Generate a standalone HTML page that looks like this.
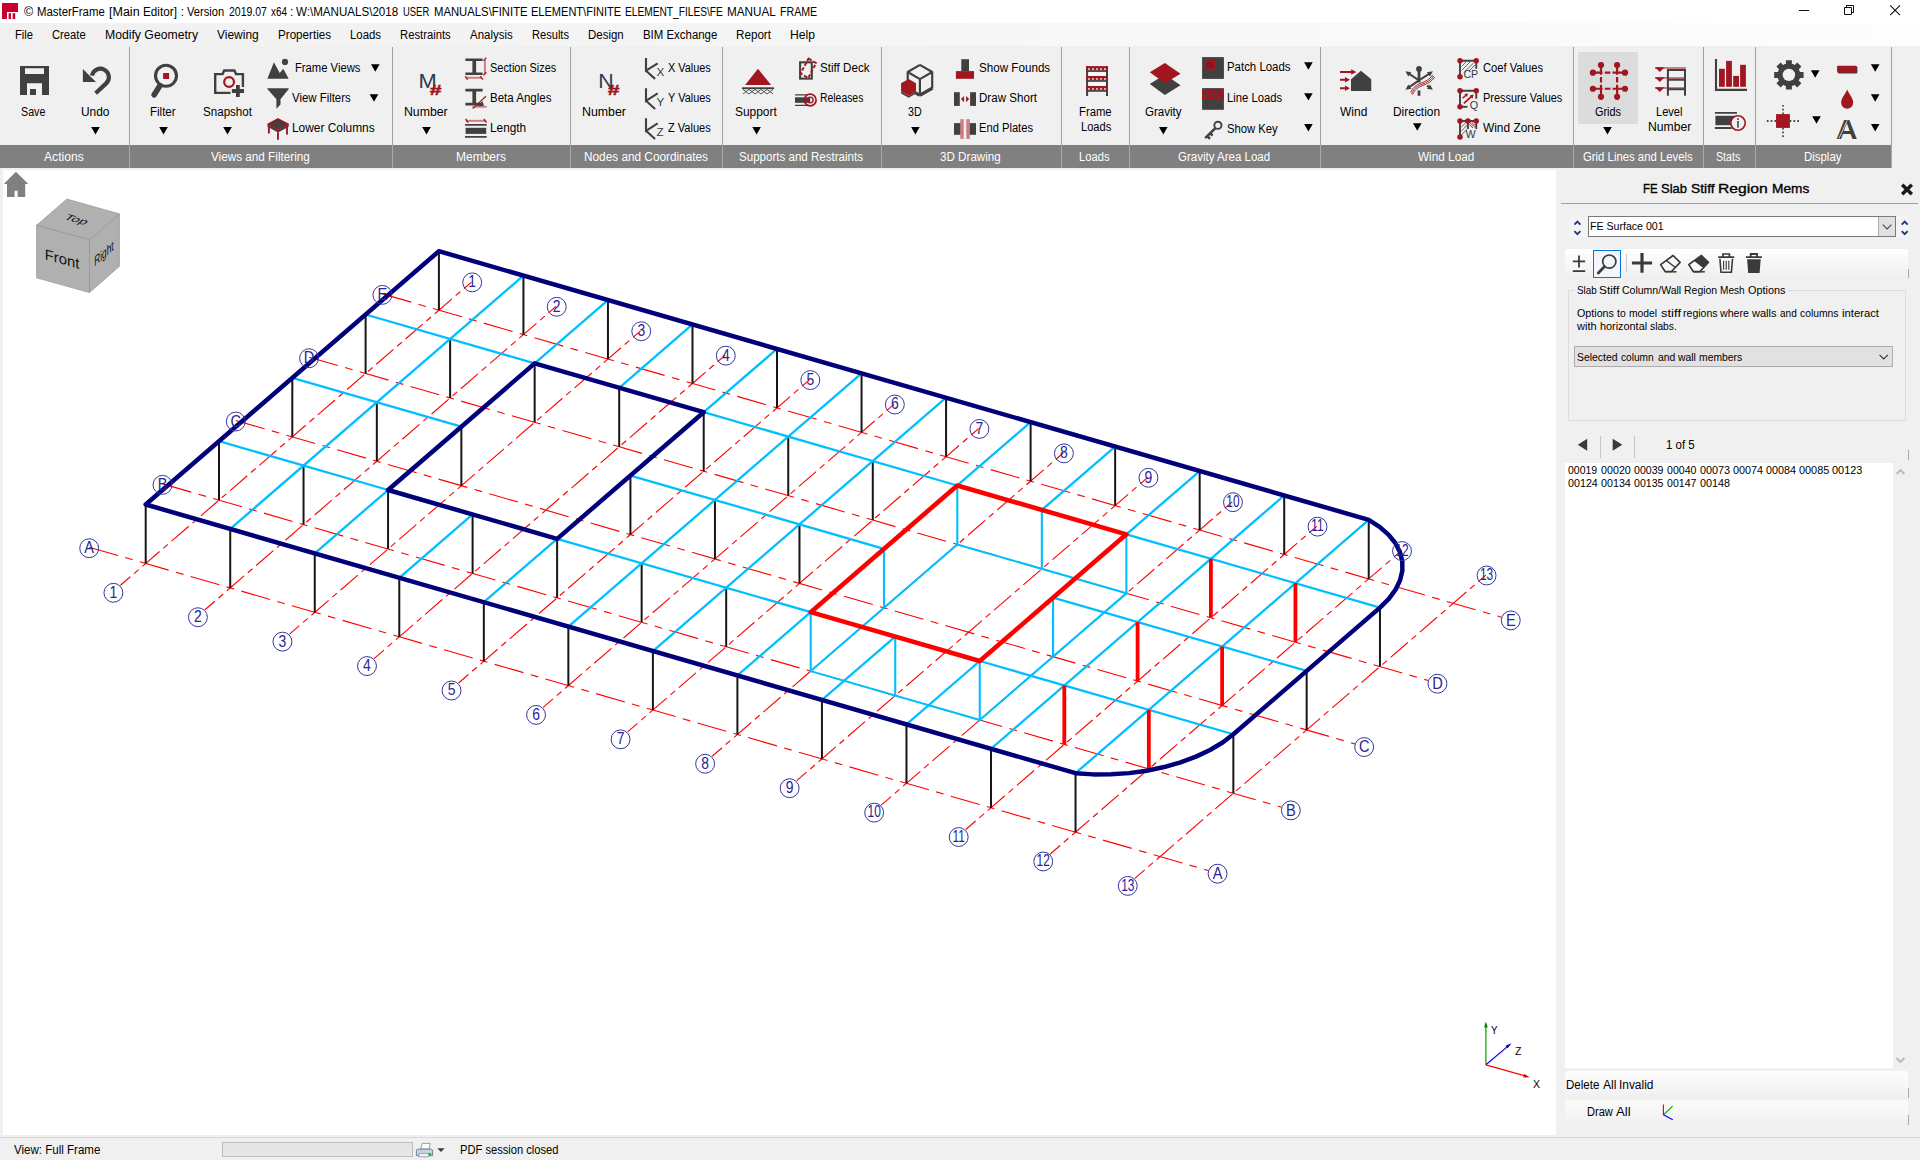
<!DOCTYPE html><html><head><meta charset="utf-8"><title>MasterFrame</title><style>
html,body{margin:0;padding:0}body{width:1920px;height:1160px;position:relative;overflow:hidden;background:#f0f0f0;font-family:"Liberation Sans",sans-serif}
.t{position:absolute;white-space:pre;line-height:16px;transform-origin:0 50%;font-family:"Liberation Sans",sans-serif}
svg{overflow:visible}
</style></head><body>
<div style="position:absolute;left:0;top:0;width:1920px;height:23px;background:#fff"></div>
<div style="position:absolute;left:0;top:23px;width:1920px;height:23px;background:linear-gradient(to right,#f0f0f0,#fdfdfd)"></div>
<div style="position:absolute;left:0;top:145px;width:1891px;height:23px;background:#808080"></div>
<div style="position:absolute;left:128.5px;top:47px;width:1px;height:98px;background:#a0a0a0"></div>
<div style="position:absolute;left:128.5px;top:145px;width:1px;height:23px;background:#a9a9a9"></div>
<div style="position:absolute;left:392.0px;top:47px;width:1px;height:98px;background:#a0a0a0"></div>
<div style="position:absolute;left:392.0px;top:145px;width:1px;height:23px;background:#a9a9a9"></div>
<div style="position:absolute;left:570.0px;top:47px;width:1px;height:98px;background:#a0a0a0"></div>
<div style="position:absolute;left:570.0px;top:145px;width:1px;height:23px;background:#a9a9a9"></div>
<div style="position:absolute;left:722.0px;top:47px;width:1px;height:98px;background:#a0a0a0"></div>
<div style="position:absolute;left:722.0px;top:145px;width:1px;height:23px;background:#a9a9a9"></div>
<div style="position:absolute;left:881.0px;top:47px;width:1px;height:98px;background:#a0a0a0"></div>
<div style="position:absolute;left:881.0px;top:145px;width:1px;height:23px;background:#a9a9a9"></div>
<div style="position:absolute;left:1060.5px;top:47px;width:1px;height:98px;background:#a0a0a0"></div>
<div style="position:absolute;left:1060.5px;top:145px;width:1px;height:23px;background:#a9a9a9"></div>
<div style="position:absolute;left:1129.0px;top:47px;width:1px;height:98px;background:#a0a0a0"></div>
<div style="position:absolute;left:1129.0px;top:145px;width:1px;height:23px;background:#a9a9a9"></div>
<div style="position:absolute;left:1320.0px;top:47px;width:1px;height:98px;background:#a0a0a0"></div>
<div style="position:absolute;left:1320.0px;top:145px;width:1px;height:23px;background:#a9a9a9"></div>
<div style="position:absolute;left:1573.0px;top:47px;width:1px;height:98px;background:#a0a0a0"></div>
<div style="position:absolute;left:1573.0px;top:145px;width:1px;height:23px;background:#a9a9a9"></div>
<div style="position:absolute;left:1703.0px;top:47px;width:1px;height:98px;background:#a0a0a0"></div>
<div style="position:absolute;left:1703.0px;top:145px;width:1px;height:23px;background:#a9a9a9"></div>
<div style="position:absolute;left:1755.0px;top:47px;width:1px;height:98px;background:#a0a0a0"></div>
<div style="position:absolute;left:1755.0px;top:145px;width:1px;height:23px;background:#a9a9a9"></div>
<div style="position:absolute;left:1891.0px;top:47px;width:1px;height:98px;background:#a0a0a0"></div>
<div style="position:absolute;left:1891.0px;top:145px;width:1px;height:23px;background:#a9a9a9"></div>
<div style="position:absolute;left:1578px;top:52px;width:60px;height:72px;background:#dcdcdc"></div>
<div style="position:absolute;left:3px;top:170px;width:1553px;height:965px;background:#fff"></div>
<div style="position:absolute;left:0;top:1137px;width:1920px;height:1px;background:#d7d7d7"></div>
<div style="position:absolute;left:222px;top:1142px;width:191px;height:15px;background:#e6e6e6;border:1px solid #bcbcbc;box-sizing:border-box"></div>
<svg id="dwg" width="1553" height="966" viewBox="3 170 1553 966" style="position:absolute;left:3px;top:170px">
<style>.g{stroke:#ff0000;stroke-width:1.12;stroke-dasharray:29.9 7.53 7.8 7.53;fill:none}.gz{stroke:#ff0000;stroke-width:1.12;stroke-dasharray:22.7 4.92 6.1 4.92;stroke-dashoffset:9.7;fill:none}.c{stroke:#161616;stroke-width:2}.cy{stroke:#00bfff;stroke-width:2.3;stroke-linecap:round}.cw{stroke:#00bfff;stroke-width:2.1;stroke-linecap:square}.n{stroke:#00007a;stroke-width:4.5;fill:none;stroke-linejoin:round;stroke-linecap:round}.r{stroke:#ff0000;stroke-width:4.6;fill:none;stroke-linejoin:round}.rc{stroke:#ff0000;stroke-width:3.8}.b{fill:none;stroke:#3535a0;stroke-width:1}.bt{fill:#262696;font-family:"Liberation Sans",sans-serif;font-size:16.2px;text-anchor:middle}</style>
<line x1="120.48" y1="585.29" x2="471.45" y2="282.06" class="gz"/>
<line x1="205.01" y1="609.71" x2="555.98" y2="306.49" class="gz"/>
<line x1="289.54" y1="634.14" x2="640.51" y2="330.91" class="gz"/>
<line x1="374.07" y1="658.56" x2="725.04" y2="355.34" class="gz"/>
<line x1="458.60" y1="682.99" x2="809.57" y2="379.76" class="gz"/>
<line x1="543.13" y1="707.41" x2="894.10" y2="404.19" class="gz"/>
<line x1="627.66" y1="731.84" x2="978.63" y2="428.61" class="gz"/>
<line x1="712.19" y1="756.26" x2="1063.16" y2="453.04" class="gz"/>
<line x1="796.72" y1="780.69" x2="1147.69" y2="477.46" class="gz"/>
<line x1="881.25" y1="805.11" x2="1232.22" y2="501.89" class="gz"/>
<line x1="965.78" y1="829.54" x2="1316.75" y2="526.31" class="gz"/>
<line x1="1050.31" y1="853.96" x2="1401.28" y2="550.74" class="gz"/>
<line x1="1134.84" y1="878.39" x2="1485.81" y2="575.16" class="gz"/>
<line x1="89.23" y1="547.18" x2="1208.16" y2="870.50" class="g"/>
<line x1="162.53" y1="483.85" x2="1281.46" y2="807.17" class="g"/>
<line x1="235.83" y1="420.52" x2="1354.76" y2="743.84" class="g"/>
<line x1="309.13" y1="357.19" x2="1428.06" y2="680.51" class="g"/>
<line x1="382.43" y1="293.86" x2="1501.36" y2="617.18" class="g"/>
<line x1="145.70" y1="504.50" x2="145.70" y2="563.50" class="c"/>
<line x1="219.00" y1="441.17" x2="219.00" y2="500.17" class="c"/>
<line x1="292.30" y1="377.84" x2="292.30" y2="436.84" class="c"/>
<line x1="365.60" y1="314.51" x2="365.60" y2="373.51" class="c"/>
<line x1="438.90" y1="251.18" x2="438.90" y2="310.18" class="c"/>
<line x1="230.23" y1="528.92" x2="230.23" y2="587.92" class="c"/>
<line x1="303.53" y1="465.59" x2="303.53" y2="524.59" class="c"/>
<line x1="376.83" y1="402.26" x2="376.83" y2="461.26" class="c"/>
<line x1="450.13" y1="338.93" x2="450.13" y2="397.93" class="c"/>
<line x1="523.43" y1="275.60" x2="523.43" y2="334.60" class="c"/>
<line x1="314.76" y1="553.35" x2="314.76" y2="612.35" class="c"/>
<line x1="388.06" y1="490.02" x2="388.06" y2="549.02" class="c"/>
<line x1="461.36" y1="426.69" x2="461.36" y2="485.69" class="c"/>
<line x1="534.66" y1="363.36" x2="534.66" y2="422.36" class="c"/>
<line x1="607.96" y1="300.03" x2="607.96" y2="359.03" class="c"/>
<line x1="399.29" y1="577.77" x2="399.29" y2="636.77" class="c"/>
<line x1="472.59" y1="514.44" x2="472.59" y2="573.44" class="c"/>
<line x1="619.19" y1="387.78" x2="619.19" y2="446.78" class="c"/>
<line x1="692.49" y1="324.45" x2="692.49" y2="383.45" class="c"/>
<line x1="483.82" y1="602.20" x2="483.82" y2="661.20" class="c"/>
<line x1="557.12" y1="538.87" x2="557.12" y2="597.87" class="c"/>
<line x1="630.42" y1="475.54" x2="630.42" y2="534.54" class="c"/>
<line x1="703.72" y1="412.21" x2="703.72" y2="471.21" class="c"/>
<line x1="777.02" y1="348.88" x2="777.02" y2="407.88" class="c"/>
<line x1="568.35" y1="626.62" x2="568.35" y2="685.62" class="c"/>
<line x1="641.65" y1="563.29" x2="641.65" y2="622.29" class="c"/>
<line x1="714.95" y1="499.97" x2="714.95" y2="558.97" class="c"/>
<line x1="788.25" y1="436.63" x2="788.25" y2="495.63" class="c"/>
<line x1="861.55" y1="373.31" x2="861.55" y2="432.31" class="c"/>
<line x1="652.88" y1="651.05" x2="652.88" y2="710.05" class="c"/>
<line x1="726.18" y1="587.72" x2="726.18" y2="646.72" class="c"/>
<line x1="799.48" y1="524.39" x2="799.48" y2="583.39" class="c"/>
<line x1="872.78" y1="461.06" x2="872.78" y2="520.06" class="c"/>
<line x1="946.08" y1="397.73" x2="946.08" y2="456.73" class="c"/>
<line x1="737.41" y1="675.48" x2="737.41" y2="734.48" class="c"/>
<line x1="1030.61" y1="422.16" x2="1030.61" y2="481.16" class="c"/>
<line x1="821.94" y1="699.90" x2="821.94" y2="758.90" class="c"/>
<line x1="1115.14" y1="446.58" x2="1115.14" y2="505.58" class="c"/>
<line x1="906.47" y1="724.33" x2="906.47" y2="783.33" class="c"/>
<line x1="1199.67" y1="471.01" x2="1199.67" y2="530.01" class="c"/>
<line x1="991.00" y1="748.75" x2="991.00" y2="807.75" class="c"/>
<line x1="1284.20" y1="495.43" x2="1284.20" y2="554.43" class="c"/>
<line x1="1075.53" y1="773.17" x2="1075.53" y2="832.17" class="c"/>
<line x1="1368.73" y1="519.86" x2="1368.73" y2="578.86" class="c"/>
<line x1="1233.36" y1="734.27" x2="1233.36" y2="793.27" class="c"/>
<line x1="1306.66" y1="670.94" x2="1306.66" y2="729.94" class="c"/>
<line x1="1379.96" y1="607.61" x2="1379.96" y2="666.61" class="c"/>
<line x1="810.71" y1="612.14" x2="810.71" y2="671.14" class="cw"/>
<line x1="895.24" y1="636.57" x2="895.24" y2="695.57" class="cw"/>
<line x1="979.77" y1="661.00" x2="979.77" y2="720.00" class="cw"/>
<line x1="884.01" y1="548.82" x2="884.01" y2="607.82" class="cw"/>
<line x1="1053.07" y1="597.67" x2="1053.07" y2="656.67" class="cw"/>
<line x1="957.31" y1="485.49" x2="957.31" y2="544.49" class="cw"/>
<line x1="1041.84" y1="509.91" x2="1041.84" y2="568.91" class="cw"/>
<line x1="1126.37" y1="534.34" x2="1126.37" y2="593.34" class="cw"/>
<line x1="810.71" y1="671.14" x2="979.77" y2="720.00" class="cw"/>
<line x1="979.77" y1="720.00" x2="1126.37" y2="593.34" class="cw"/>
<line x1="1126.37" y1="593.34" x2="957.31" y2="544.49" class="cw"/>
<line x1="957.31" y1="544.49" x2="810.71" y2="671.14" class="cw"/>
<line x1="219.00" y1="441.17" x2="388.06" y2="490.02" class="cy"/>
<line x1="557.12" y1="538.87" x2="810.71" y2="612.14" class="cy"/>
<line x1="979.77" y1="661.00" x2="1233.36" y2="734.27" class="cy"/>
<line x1="292.30" y1="377.84" x2="461.36" y2="426.69" class="cy"/>
<line x1="630.42" y1="475.54" x2="884.01" y2="548.82" class="cy"/>
<line x1="1053.07" y1="597.67" x2="1306.66" y2="670.94" class="cy"/>
<line x1="365.60" y1="314.51" x2="534.66" y2="363.36" class="cy"/>
<line x1="703.72" y1="412.21" x2="957.31" y2="485.49" class="cy"/>
<line x1="1126.37" y1="534.34" x2="1379.96" y2="607.61" class="cy"/>
<line x1="230.23" y1="528.92" x2="523.43" y2="275.60" class="cy"/>
<line x1="314.76" y1="553.35" x2="388.06" y2="490.02" class="cy"/>
<line x1="534.66" y1="363.36" x2="607.96" y2="300.03" class="cy"/>
<line x1="399.29" y1="577.77" x2="472.59" y2="514.44" class="cy"/>
<line x1="619.19" y1="387.78" x2="692.49" y2="324.45" class="cy"/>
<line x1="483.82" y1="602.20" x2="557.12" y2="538.87" class="cy"/>
<line x1="703.72" y1="412.21" x2="777.02" y2="348.88" class="cy"/>
<line x1="568.35" y1="626.62" x2="861.55" y2="373.31" class="cy"/>
<line x1="652.88" y1="651.05" x2="946.08" y2="397.73" class="cy"/>
<line x1="737.41" y1="675.48" x2="810.71" y2="612.14" class="cy"/>
<line x1="957.31" y1="485.49" x2="1030.61" y2="422.16" class="cy"/>
<line x1="821.94" y1="699.90" x2="895.24" y2="636.57" class="cy"/>
<line x1="1041.84" y1="509.91" x2="1115.14" y2="446.58" class="cy"/>
<line x1="906.47" y1="724.33" x2="979.77" y2="661.00" class="cy"/>
<line x1="1126.37" y1="534.34" x2="1199.67" y2="471.01" class="cy"/>
<line x1="991.00" y1="748.75" x2="1284.20" y2="495.43" class="cy"/>
<line x1="1075.53" y1="773.17" x2="1368.73" y2="519.86" class="cy"/>
<line x1="1064.30" y1="685.42" x2="1064.30" y2="744.42" class="rc"/>
<line x1="1137.60" y1="622.09" x2="1137.60" y2="681.09" class="rc"/>
<line x1="1210.90" y1="558.76" x2="1210.90" y2="617.76" class="rc"/>
<line x1="1148.83" y1="709.84" x2="1148.83" y2="768.84" class="rc"/>
<line x1="1222.13" y1="646.51" x2="1222.13" y2="705.51" class="rc"/>
<line x1="1295.43" y1="583.18" x2="1295.43" y2="642.18" class="rc"/>
<polygon class="n" points="145.70,504.50 1075.53,773.17 1093.07,774.38 1110.99,774.36 1129.00,773.12 1146.79,770.68 1164.07,767.07 1180.55,762.35 1195.96,756.61 1210.05,749.95 1222.59,742.46 1233.36,734.27 1379.96,607.61 1388.79,598.86 1395.53,589.70 1400.07,580.27 1402.34,570.73 1402.29,561.24 1399.93,551.96 1395.31,543.04 1388.48,534.62 1379.57,526.85 1368.73,519.86 438.90,251.18"/>
<polygon class="n" points="388.06,490.02 557.12,538.87 703.72,412.21 534.66,363.36"/>
<polygon class="r" points="810.71,612.14 979.77,661.00 1126.37,534.34 957.31,485.49"/>
<circle cx="113.40" cy="592.80" r="9.45" class="b"/>
<text transform="translate(113.40 597.70) scale(0.86 1)" class="bt">1</text>
<circle cx="472.20" cy="282.38" r="9.45" class="b"/>
<text transform="translate(472.20 287.28) scale(0.86 1)" class="bt">1</text>
<circle cx="197.93" cy="617.22" r="9.45" class="b"/>
<text transform="translate(197.93 622.12) scale(0.86 1)" class="bt">2</text>
<circle cx="556.73" cy="306.80" r="9.45" class="b"/>
<text transform="translate(556.73 311.70) scale(0.86 1)" class="bt">2</text>
<circle cx="282.46" cy="641.65" r="9.45" class="b"/>
<text transform="translate(282.46 646.55) scale(0.86 1)" class="bt">3</text>
<circle cx="641.26" cy="331.23" r="9.45" class="b"/>
<text transform="translate(641.26 336.13) scale(0.86 1)" class="bt">3</text>
<circle cx="366.99" cy="666.07" r="9.45" class="b"/>
<text transform="translate(366.99 670.97) scale(0.86 1)" class="bt">4</text>
<circle cx="725.79" cy="355.65" r="9.45" class="b"/>
<text transform="translate(725.79 360.55) scale(0.86 1)" class="bt">4</text>
<circle cx="451.52" cy="690.50" r="9.45" class="b"/>
<text transform="translate(451.52 695.40) scale(0.86 1)" class="bt">5</text>
<circle cx="810.32" cy="380.08" r="9.45" class="b"/>
<text transform="translate(810.32 384.98) scale(0.86 1)" class="bt">5</text>
<circle cx="536.05" cy="714.92" r="9.45" class="b"/>
<text transform="translate(536.05 719.82) scale(0.86 1)" class="bt">6</text>
<circle cx="894.85" cy="404.50" r="9.45" class="b"/>
<text transform="translate(894.85 409.40) scale(0.86 1)" class="bt">6</text>
<circle cx="620.58" cy="739.35" r="9.45" class="b"/>
<text transform="translate(620.58 744.25) scale(0.86 1)" class="bt">7</text>
<circle cx="979.38" cy="428.93" r="9.45" class="b"/>
<text transform="translate(979.38 433.83) scale(0.86 1)" class="bt">7</text>
<circle cx="705.11" cy="763.77" r="9.45" class="b"/>
<text transform="translate(705.11 768.67) scale(0.86 1)" class="bt">8</text>
<circle cx="1063.91" cy="453.36" r="9.45" class="b"/>
<text transform="translate(1063.91 458.25) scale(0.86 1)" class="bt">8</text>
<circle cx="789.64" cy="788.20" r="9.45" class="b"/>
<text transform="translate(789.64 793.10) scale(0.86 1)" class="bt">9</text>
<circle cx="1148.44" cy="477.78" r="9.45" class="b"/>
<text transform="translate(1148.44 482.68) scale(0.86 1)" class="bt">9</text>
<circle cx="874.17" cy="812.62" r="9.45" class="b"/>
<text transform="translate(874.17 817.33) scale(0.735 1)" class="bt">10</text>
<circle cx="1232.97" cy="502.21" r="9.45" class="b"/>
<text transform="translate(1232.97 506.91) scale(0.735 1)" class="bt">10</text>
<circle cx="958.70" cy="837.05" r="9.45" class="b"/>
<text transform="translate(958.70 841.75) scale(0.735 1)" class="bt">11</text>
<circle cx="1317.50" cy="526.63" r="9.45" class="b"/>
<text transform="translate(1317.50 531.33) scale(0.735 1)" class="bt">11</text>
<circle cx="1043.23" cy="861.47" r="9.45" class="b"/>
<text transform="translate(1043.23 866.17) scale(0.735 1)" class="bt">12</text>
<circle cx="1402.03" cy="551.06" r="9.45" class="b"/>
<text transform="translate(1402.03 555.76) scale(0.735 1)" class="bt">12</text>
<circle cx="1127.76" cy="885.90" r="9.45" class="b"/>
<text transform="translate(1127.76 890.60) scale(0.735 1)" class="bt">13</text>
<circle cx="1486.56" cy="575.48" r="9.45" class="b"/>
<text transform="translate(1486.56 580.18) scale(0.735 1)" class="bt">13</text>
<circle cx="89.20" cy="548.20" r="9.45" class="b"/>
<text transform="translate(89.20 553.40) scale(0.9 1)" class="bt">A</text>
<circle cx="1217.56" cy="873.70" r="9.45" class="b"/>
<text transform="translate(1217.56 878.90) scale(0.9 1)" class="bt">A</text>
<circle cx="162.50" cy="484.87" r="9.45" class="b"/>
<text transform="translate(162.50 490.07) scale(0.9 1)" class="bt">B</text>
<circle cx="1290.86" cy="810.37" r="9.45" class="b"/>
<text transform="translate(1290.86 815.57) scale(0.9 1)" class="bt">B</text>
<circle cx="235.80" cy="421.54" r="9.45" class="b"/>
<text transform="translate(235.80 426.74) scale(0.9 1)" class="bt">C</text>
<circle cx="1364.16" cy="747.04" r="9.45" class="b"/>
<text transform="translate(1364.16 752.24) scale(0.9 1)" class="bt">C</text>
<circle cx="309.10" cy="358.21" r="9.45" class="b"/>
<text transform="translate(309.10 363.41) scale(0.9 1)" class="bt">D</text>
<circle cx="1437.46" cy="683.71" r="9.45" class="b"/>
<text transform="translate(1437.46 688.91) scale(0.9 1)" class="bt">D</text>
<circle cx="382.40" cy="294.88" r="9.45" class="b"/>
<text transform="translate(382.40 300.08) scale(0.9 1)" class="bt">E</text>
<circle cx="1510.76" cy="620.38" r="9.45" class="b"/>
<text transform="translate(1510.76 625.58) scale(0.9 1)" class="bt">E</text>
</svg>
<div style="position:absolute;left:1561px;top:203px;width:357px;height:1px;background:#a0a0a0"></div>
<div style="position:absolute;left:1569px;top:216px;width:18px;height:21px;background:#f4f4f4"></div>
<div style="position:absolute;left:1896px;top:216px;width:13px;height:21px;background:#f4f4f4"></div>
<div style="position:absolute;left:1588px;top:216px;width:308px;height:21px;background:#fff;border:1px solid #7a7a7a;box-sizing:border-box"></div>
<div style="position:absolute;left:1878px;top:217px;width:17px;height:19px;background:#e1e1e1;border-left:1px solid #adadad;box-sizing:border-box"></div>
<div style="position:absolute;left:1565px;top:249px;width:343px;height:29px;background:linear-gradient(#ffffff,#f8f8f8 45%,#efefef);border-radius:2px"></div>
<div style="position:absolute;left:1908px;top:269px;width:1px;height:9px;background:#a8a8a8"></div>
<div style="position:absolute;left:1592.5px;top:250px;width:28px;height:28px;background:#f2f6fb;border:1px solid #0078d7;box-sizing:border-box"></div>
<div style="position:absolute;left:1625.5px;top:254px;width:1px;height:18px;background:#c8c8c8"></div>
<div style="position:absolute;left:1568px;top:290px;width:338px;height:131px;border:1px solid #dcdcdc;box-sizing:border-box"></div>
<div style="position:absolute;left:1574px;top:284px;width:214px;height:12px;background:#f0f0f0"></div>
<div style="position:absolute;left:1574px;top:346px;width:319px;height:21px;background:#e1e1e1;border:1px solid #adadad;box-sizing:border-box"></div>
<div style="position:absolute;left:1908px;top:450px;width:1px;height:10px;background:#a8a8a8"></div>
<div style="position:absolute;left:1600px;top:436px;width:1px;height:22px;background:#c4c4c4"></div>
<div style="position:absolute;left:1634px;top:436px;width:1px;height:22px;background:#c4c4c4"></div>
<div style="position:absolute;left:1565px;top:463px;width:328px;height:605px;background:#fff"></div>
<div style="position:absolute;left:1565px;top:1071px;width:343px;height:27px;background:linear-gradient(#fdfdfd,#f7f7f7 50%,#efefef);border-radius:3px 3px 0 0"></div>
<div style="position:absolute;left:1908px;top:1088px;width:1px;height:10px;background:#a8a8a8"></div>
<div style="position:absolute;left:1565px;top:1100px;width:343px;height:25px;background:linear-gradient(#fbfbfb,#f6f6f6 50%,#efefef)"></div>
<div style="position:absolute;left:1908px;top:1115px;width:1px;height:10px;background:#a8a8a8"></div>
<svg width="370" height="970" viewBox="1550 168 370 970" style="position:absolute;left:1550px;top:168px">
<path d="M1902.2 184.8 L1911.8 194.2 M1911.8 184.8 L1902.2 194.2" stroke="#1a1a1a" stroke-width="3.5" stroke-linecap="butt"/>
<path d="M1574.4 224.6 l3 -3 l3 3 M1574.4 231.2 l3 3 l3 -3" fill="none" stroke="#1c3d7a" stroke-width="1.9"/>
<path d="M1901.7 224.6 l3 -3 l3 3 M1901.7 231.2 l3 3 l3 -3" fill="none" stroke="#1c3d7a" stroke-width="1.9"/>
<path d="M1882.8 224.6 l4.3 4.3 l4.3 -4.3" fill="none" stroke="#444" stroke-width="1.1"/>
<path d="M1879.5 354.8 l4.2 4.2 l4.2 -4.2" fill="none" stroke="#333" stroke-width="1.1"/>
<path d="M1572.8 261.4 h12.4 M1579 255.4 v12 M1572.8 271.2 h12.4" stroke="#3a3a3a" stroke-width="1.8" fill="none"/>
<circle cx="1609.3" cy="261.6" r="6.6" fill="none" stroke="#3a3a3a" stroke-width="1.7"/><path d="M1604.4 266.6 L1598.3 273" stroke="#3a3a3a" stroke-width="2.8" stroke-linecap="round"/>
<path d="M1631.9 263 h20.2 M1642 253 v19.8" stroke="#3a3a3a" stroke-width="3.2" fill="none"/>
<g transform="translate(1669.9 263.8)"><path d="M-9.3 0.8 L3.2 -8.3 L10.2 -1.4 L1.6 7.7 L-4.8 7.7 Z" fill="#f8f8f8" stroke="#3a3a3a" stroke-width="1.7" stroke-linejoin="round"/><path d="M-3.6 -3.4 L5.4 3.7" stroke="#3a3a3a" stroke-width="1.4"/><path d="M-4.8 8 h11.4" stroke="#3a3a3a" stroke-width="1.5"/></g>
<g transform="translate(1698.2 263.8)"><path d="M-9.3 0.8 L3.2 -8.3 L10.2 -1.4 L1.6 7.7 L-4.8 7.7 Z" fill="#3a3a3a" stroke="#3a3a3a" stroke-width="1.7" stroke-linejoin="round"/><path d="M-9.3 0.8 L-3.6 -3.4 L5.4 3.7 L1.6 7.7 L-4.8 7.7 Z" fill="#fafafa" stroke="#3a3a3a" stroke-width="1.4" stroke-linejoin="round"/><path d="M-4.8 8 h11.4" stroke="#3a3a3a" stroke-width="1.5"/></g>
<g transform="translate(1726.2 263.8)"><path d="M-8 -6.6 h16 M-3.2 -6.6 v-3.2 h6.4 v3.2" fill="none" stroke="#3a3a3a" stroke-width="1.7"/><path d="M-6.3 -5 L-5.2 8.4 H5.2 L6.3 -5" fill="none" stroke="#3a3a3a" stroke-width="1.6"/><path d="M-2.6 -3 v9 M0 -3 v9 M2.6 -3 v9" stroke="#3a3a3a" stroke-width="1.1"/></g>
<g transform="translate(1753.9 263.8)"><path d="M-8 -6.6 h16 M-3.2 -6.6 v-3.2 h6.4 v3.2" fill="none" stroke="#3a3a3a" stroke-width="1.8"/><path d="M-6.8 -4.6 L-5.7 9.2 H5.7 L6.8 -4.6 Z" fill="#3a3a3a"/></g>
<path d="M1587.2 438.8 v12 l-9.4 -6 Z" fill="#3a3a3a"/><path d="M1612.7 438.8 v12 l9.6 -6 Z" fill="#3a3a3a"/>
<path d="M1896.5 474 l4 -4 l4 4" fill="none" stroke="#b8b8b8" stroke-width="1.8"/><path d="M1896.5 1058 l4 4 l4 -4" fill="none" stroke="#b8b8b8" stroke-width="1.8"/>
<path d="M1663.4 1104.6 V1114.8" stroke="#e00000" stroke-width="1.1"/><path d="M1663.4 1114.8 L1672.6 1106.2" stroke="#00a000" stroke-width="1.1"/><path d="M1663.4 1114.8 L1672.8 1119.8" stroke="#0000ff" stroke-width="1.1"/>
</svg>
<svg width="1553" height="966" viewBox="3 170 1553 966" style="position:absolute;left:3px;top:170px;font-family:'Liberation Sans',sans-serif">
<path d="M15.9 171.8 L28.3 183.9 H25.2 V197 H17.6 V190.8 H14.6 V197 H7 V183.9 H3.8 Z" fill="#808080"/>
<polygon points="66.9,199.1 119.4,213.9 119.4,266.3 89.5,292.6 36.6,277.8 36.6,225.3" fill="#b0b0b0" stroke="#9a9a9a" stroke-width="0.8"/>
<path d="M36.6 225.3 L89.5 239.8 L119.4 213.9 M89.5 239.8 V292.6" fill="none" stroke="#979797" stroke-width="0.9"/>
<text transform="matrix(1 0.274 0 1 44.8 259.3)" font-size="14.8" fill="#111">Front</text>
<text transform="matrix(0.95 0.26 -0.55 0.5 62.8 219)" font-size="14.4" fill="#111">Top</text>
<text transform="matrix(0.6 -0.52 0 1 94.3 266.6)" font-size="13.8" fill="#111">Right</text>
<path d="M1485.9 1064.8 V1024" stroke="#00a000" stroke-width="1.2"/><path d="M1484.1 1027.5 L1485.9 1021.5 L1487.7 1027.5 Z" fill="#008000"/>
<path d="M1485.9 1064.8 L1509.5 1044.9" stroke="#0000ff" stroke-width="1.2"/><path d="M1511.4 1043.3 L1507.6 1048.3 L1505.5 1045.7 Z" fill="#0000c0"/>
<path d="M1485.9 1064.8 L1526 1076.2" stroke="#ff0000" stroke-width="1.2"/><path d="M1529.8 1077.3 L1523.2 1077.4 L1524.2 1073.9 Z" fill="#d00000"/>
</svg>
<svg width="40" height="20" viewBox="414 1140 40 20" style="position:absolute;left:414px;top:1140px">
<path d="M420.5 1149 l1.8 -5.6 h8 l-1.2 5.6 Z" fill="#fafcff" stroke="#7a8aa0" stroke-width="0.8"/>
<path d="M417.2 1149.2 h14.6 l0.8 1 v5.4 h-16.2 v-5.4 Z" fill="#c9d3e3" stroke="#68788f" stroke-width="0.9"/>
<path d="M418.8 1153.4 h10 v3.4 h-10 Z" fill="#eef1f6" stroke="#7a8aa0" stroke-width="0.7"/>
<rect x="428.6" y="1153" width="2.6" height="2.4" fill="#20c020"/>
<path d="M437.4 1148.2 h7.2 l-3.6 3.8 Z" fill="#3a3a3a"/>
</svg>
<svg width="1920" height="170" viewBox="0 0 1920 170" style="position:absolute;left:0;top:0;font-family:'Liberation Sans',sans-serif">
<path d="M2 3 H18 V12 H7 V19 H2 Z" fill="#c8002d"/><rect x="8.6" y="13.2" width="2.4" height="5.8" fill="#c8002d"/><rect x="12.6" y="13.2" width="2.6" height="5.8" fill="#c8002d"/>
<path d="M1799 10.5 h10" stroke="#111" stroke-width="1"/>
<path d="M1844.5 7.5 h7 v7 h-7 Z M1846.5 7.5 v-2 h7 v7 h-2" fill="none" stroke="#111" stroke-width="1"/>
<path d="M1890.2 5.3 l9.8 9.8 M1900 5.3 l-9.8 9.8" stroke="#111" stroke-width="1.1"/>
<path d="M91.20 127.10 h8.6 l-4.3 7.4 Z" fill="#000"/>
<path d="M159.20 127.10 h8.6 l-4.3 7.4 Z" fill="#000"/>
<path d="M223.20 127.10 h8.6 l-4.3 7.4 Z" fill="#000"/>
<path d="M371.00 64.30 h8.6 l-4.3 7.4 Z" fill="#000"/>
<path d="M369.70 94.30 h8.6 l-4.3 7.4 Z" fill="#000"/>
<path d="M422.20 127.00 h8.6 l-4.3 7.4 Z" fill="#000"/>
<path d="M752.30 127.00 h8.6 l-4.3 7.4 Z" fill="#000"/>
<path d="M911.10 127.00 h8.6 l-4.3 7.4 Z" fill="#000"/>
<path d="M1159.00 127.00 h8.6 l-4.3 7.4 Z" fill="#000"/>
<path d="M1304.10 62.30 h8.6 l-4.3 7.4 Z" fill="#000"/>
<path d="M1304.10 93.20 h8.6 l-4.3 7.4 Z" fill="#000"/>
<path d="M1304.10 124.10 h8.6 l-4.3 7.4 Z" fill="#000"/>
<path d="M1413.00 123.30 h8.6 l-4.3 7.4 Z" fill="#000"/>
<path d="M1603.20 127.10 h8.6 l-4.3 7.4 Z" fill="#000"/>
<path d="M1810.90 70.30 h8.6 l-4.3 7.4 Z" fill="#000"/>
<path d="M1812.20 116.30 h8.6 l-4.3 7.4 Z" fill="#000"/>
<path d="M1870.90 64.30 h8.6 l-4.3 7.4 Z" fill="#000"/>
<path d="M1870.90 94.30 h8.6 l-4.3 7.4 Z" fill="#000"/>
<path d="M1870.90 124.10 h8.6 l-4.3 7.4 Z" fill="#000"/>
<path fill-rule="evenodd" d="M20 66 H49 V95 H20 Z M25 68.2 H44 V74 H25 Z M27 83.2 H42 V95 H27 Z" fill="#404040"/><rect x="30" y="89" width="6" height="6" fill="#404040"/>
<path d="M82.9 68.9 V81.9 H96 Z" fill="#404040"/>
<path d="M92 75.7 A8.5 8.5 0 1 1 106.2 83.4 L95.6 93.3" fill="none" stroke="#404040" stroke-width="4.2"/>
<circle cx="166" cy="75.8" r="10.5" fill="none" stroke="#404040" stroke-width="3.1"/><path d="M160 85.6 L154.2 94.8" stroke="#404040" stroke-width="5.6" stroke-linecap="round"/><rect x="163.1" y="73" width="6" height="6" fill="#a1161f"/>
<path d="M230.5 92.9 H215.2 V74.1 H222.6 L224.2 70.5 H234.4 L236 74.1 H242.9 V86.9" fill="none" stroke="#404040" stroke-width="2.4"/>
<circle cx="229.1" cy="82" r="4.9" fill="none" stroke="#a1161f" stroke-width="2.2"/>
<path d="M231.9 91 H244 M237.9 85.1 V96.9" stroke="#404040" stroke-width="3.8"/>
<path d="M267.4 78.7 L273.9 62.3 L279.7 72.9 L283.3 68.8 L288.7 78.7 Z" fill="#404040"/><circle cx="285" cy="61.9" r="3.1" fill="#404040"/>
<path d="M267.4 88.2 H288.7 V89 L280.5 99.3 V104.5 L276.4 108.8 V99.3 L267.4 89 Z" fill="#404040"/>
<path d="M267.5 124.1 L278 129.9 L288.7 124.1 V126.8 L278 132.6 L267.5 126.8 Z" fill="#404040"/>
<path d="M278 118.9 L287.8 124.1 L278 129.3 L268.4 124.1 Z" fill="#404040" stroke="#a1161f" stroke-width="1.5" stroke-linejoin="miter"/>
<path d="M268.9 126.6 V133.5 M278 132.3 V139.7 M287 126.6 V134.4" stroke="#a1161f" stroke-width="1.9"/>
<text transform="translate(418.6 87.9) scale(1.07 1)" font-size="20.5" fill="#2e3a4e">M</text><text transform="translate(429.6 95) scale(1.45 1)" font-size="14.6" font-weight="bold" font-style="italic" fill="#a1161f" stroke="#a1161f" stroke-width="0.45">#</text>
<text transform="translate(598.2 87.9) scale(1.04 1)" font-size="20.5" fill="#2e3a4e">N</text><text transform="translate(607.6 95) scale(1.45 1)" font-size="14.6" font-weight="bold" font-style="italic" fill="#a1161f" stroke="#a1161f" stroke-width="0.45">#</text>
<path d="M465.4 59.75 H482.6 M465.4 73.75 H482.6" stroke="#404040" stroke-width="2.7"/><path d="M474.25 59.75 V73.75" stroke="#404040" stroke-width="3.7"/>
<path d="M484.9 59 V73.75 M466.3 77.8 H481.8" stroke="#cf7b82" stroke-width="1.9"/>
<path d="M483.4 60.6 L486.4 57.6 M483.4 75.3 L486.4 72.3 M465.2 76.2 L467.6 79.6 M480.4 76.2 L483 79.6" stroke="#a1161f" stroke-width="1.3"/>
<path d="M465.4 90.05 H482.6 M465.4 104.15 H482.6" stroke="#404040" stroke-width="2.7"/><path d="M474.25 90.05 V104.15" stroke="#404040" stroke-width="3.7"/>
<path d="M472.4 106.8 H486.7" stroke="#cf7b82" stroke-width="1.8"/><path d="M476.9 105.9 H483.9 L482.6 101.2 Z" fill="#404040"/><path d="M472.8 108.6 L485.9 96.3" stroke="#a1161f" stroke-width="1.2"/>
<path d="M465.8 120.8 H486.3" stroke="#cf7b82" stroke-width="1.9"/><path d="M465.6 119 L468.2 122.6 M483.9 119 L486.5 122.6" stroke="#a1161f" stroke-width="1.3"/>
<path d="M465 124.95 H486.7 M465 136.9 H486.7" stroke="#404040" stroke-width="1.8"/><rect x="465.6" y="127.8" width="20.6" height="6.1" fill="#404040"/>
<path d="M646 58.1 V70.7 L657.7 63.3 M646 70.7 L655.1 78.9" fill="none" stroke="#404040" stroke-width="2.1"/>
<text x="656.6" y="75.9" font-size="11.6" fill="#2e3a4e">X</text>
<path d="M646 88.2 V100.8 L657.7 93.4 M646 100.8 L655.1 109.0" fill="none" stroke="#404040" stroke-width="2.1"/>
<text x="656.6" y="106.0" font-size="11.6" fill="#2e3a4e">Y</text>
<path d="M646 118.2 V130.8 L657.7 123.4 M646 130.8 L655.1 139.0" fill="none" stroke="#404040" stroke-width="2.1"/>
<text x="656.6" y="136.0" font-size="11.6" fill="#2e3a4e">Z</text>
<path d="M758 68.8 L771.1 84.9 H745.1 Z" fill="#a1161f"/><rect x="742" y="87.3" width="32" height="1.9" fill="#404040"/>
<path d="M743 94 M743.0 94 L749.0 89.4 M743.0 89.4 L749.0 94 M749.0 94 L755.0 89.4 M749.0 89.4 L755.0 94 M755.0 94 L761.0 89.4 M755.0 89.4 L761.0 94 M761.0 94 L767.0 89.4 M761.0 89.4 L767.0 94 M767.0 94 L773.0 89.4 M767.0 89.4 L773.0 94 " stroke="#404040" stroke-width="0.9" fill="none"/>
<rect x="800.1" y="62.3" width="11.7" height="16.3" fill="none" stroke="#404040" stroke-width="2.1"/>
<path d="M808.5 58.6 L816.1 63.1 L808.2 78 L800.6 73.4 Z" fill="none" stroke="#a1161f" stroke-width="1.9" stroke-dasharray="3.6 1.8"/>
<path d="M795 94.85 H807 M795 105.3 H807" stroke="#404040" stroke-width="1.3"/><rect x="795" y="97.3" width="15.2" height="5.5" fill="#404040"/>
<circle cx="810.2" cy="100" r="5.9" fill="none" stroke="#a1161f" stroke-width="1.7"/><circle cx="810.2" cy="100" r="2.9" fill="none" stroke="#a1161f" stroke-width="1.4"/>
<path d="M919.9 64.9 L932.2 72 V87.6 L919.9 94.7 M919.9 64.9 L907.7 72 V80 M907.7 72 L919.9 79.1 L932.2 72 M919.9 79.1 V94.7" fill="none" stroke="#404040" stroke-width="2.2" stroke-linejoin="round"/>
<path d="M919.9 95.4 L932.6 88.1 M919.9 95.4 L915 92.6" stroke="#404040" stroke-width="3" fill="none"/>
<path d="M901.1 91.4 L908.7 95.8 L916 91.4 V93.4 L908.7 97.8 L901.1 93.4 Z" fill="#404040"/>
<path d="M908.7 79.1 L916 83.2 V91.4 L908.7 95.7 L901.1 91.4 V83.2 Z" fill="#a1161f"/>
<rect x="961.3" y="59.2" width="7.7" height="12" fill="#404040"/><rect x="955.9" y="71.1" width="18.1" height="7.7" fill="#a1161f"/>
<rect x="954" y="92.2" width="5.8" height="13.7" fill="#404040"/><rect x="970.1" y="92.2" width="5.9" height="13.7" fill="#404040"/>
<path d="M960.9 99.1 L964.1 96 V102.3 Z M969.2 99.1 L966.1 96 V102.3 Z" fill="#a1161f"/>
<rect x="954" y="123.1" width="6.8" height="11.7" fill="#404040"/><rect x="969.3" y="123.1" width="6.7" height="11.7" fill="#404040"/>
<rect x="960.3" y="119.2" width="3.4" height="19.7" fill="#cf7b82"/><rect x="966.3" y="119.2" width="3.5" height="19.7" fill="#cf7b82"/>
<path d="M1087.1 66.1 V95.9 M1107 66.1 V95.9" stroke="#404040" stroke-width="2"/>
<rect x="1086.1" y="66.1" width="21.9" height="4.1" fill="#a1161f"/><rect x="1086.1" y="70.2" width="21.9" height="1.7" fill="#404040"/>
<rect x="1088.2" y="68.2" width="1.5" height="1.7" fill="#f4f4f4"/>
<rect x="1092.2" y="68.2" width="1.5" height="1.7" fill="#f4f4f4"/>
<rect x="1096.2" y="68.2" width="1.5" height="1.7" fill="#f4f4f4"/>
<rect x="1100.2" y="68.2" width="1.5" height="1.7" fill="#f4f4f4"/>
<rect x="1104.2" y="68.2" width="1.5" height="1.7" fill="#f4f4f4"/>
<rect x="1086.1" y="76.0" width="21.9" height="4.1" fill="#a1161f"/><rect x="1086.1" y="80.1" width="21.9" height="1.7" fill="#404040"/>
<rect x="1088.2" y="78.1" width="1.5" height="1.7" fill="#f4f4f4"/>
<rect x="1092.2" y="78.1" width="1.5" height="1.7" fill="#f4f4f4"/>
<rect x="1096.2" y="78.1" width="1.5" height="1.7" fill="#f4f4f4"/>
<rect x="1100.2" y="78.1" width="1.5" height="1.7" fill="#f4f4f4"/>
<rect x="1104.2" y="78.1" width="1.5" height="1.7" fill="#f4f4f4"/>
<rect x="1086.1" y="86.0" width="21.9" height="4.1" fill="#a1161f"/><rect x="1086.1" y="90.1" width="21.9" height="1.7" fill="#404040"/>
<rect x="1088.2" y="88.1" width="1.5" height="1.7" fill="#f4f4f4"/>
<rect x="1092.2" y="88.1" width="1.5" height="1.7" fill="#f4f4f4"/>
<rect x="1096.2" y="88.1" width="1.5" height="1.7" fill="#f4f4f4"/>
<rect x="1100.2" y="88.1" width="1.5" height="1.7" fill="#f4f4f4"/>
<rect x="1104.2" y="88.1" width="1.5" height="1.7" fill="#f4f4f4"/>
<rect x="1088.4" y="72.7" width="17.4" height="2.6" fill="#f8f8f8"/><rect x="1088.4" y="82.6" width="17.4" height="2.6" fill="#f8f8f8"/>
<path d="M1164.9 74.6 L1180.5 85.2 L1164.9 95 L1149.8 84 Z" fill="#404040"/><path d="M1164.9 62.9 L1180.5 73.7 L1164.9 83.3 L1149.8 72.2 Z" fill="#a1161f"/>
<rect x="1202.1" y="57.1" width="21.8" height="21.8" fill="#404040"/><rect x="1205" y="60" width="10.1" height="10.1" fill="#a1161f"/>
<circle cx="1210" cy="65" r="2.7" fill="none" stroke="#70101a" stroke-width="0.8"/><path d="M1208.2 63.2 L1211.8 66.8 M1211.8 63.2 L1208.2 66.8" stroke="#70101a" stroke-width="0.8"/>
<rect x="1202.1" y="88.1" width="21.8" height="21.7" fill="#404040"/><rect x="1202.1" y="90.1" width="21.8" height="9.9" fill="#a1161f"/>
<path d="M1204 92.2 L1209.3 97.5 M1210.2 92.2 L1215.5 97.5 M1216.5 92.2 L1221.8 97.5" stroke="#404040" stroke-width="2"/>
<circle cx="1217.9" cy="125.3" r="3.6" fill="none" stroke="#404040" stroke-width="1.9"/>
<path d="M1215.4 128.1 L1205.2 138.1" stroke="#404040" stroke-width="2.6"/><path d="M1210.6 133.6 L1212.6 135.6 M1207.6 136.4 L1210 138.9" stroke="#404040" stroke-width="2.4"/>
<path d="M1351 91 V79.2 L1361 70.7 L1371.25 79.2 V91 Z" fill="#404040"/>
<path d="M1340 71.9 H1353 M1340 79.75 H1347 M1340 88.2 H1347" stroke="#a1161f" stroke-width="2"/>
<path d="M1351.2 69.2 L1356.3 71.9 L1351.2 74.7 Z M1345 77 L1350 79.75 L1345 82.5 Z M1345 85.5 L1350 88.2 L1345 91 Z" fill="#a1161f"/>
<circle cx="1419" cy="69" r="2.9" fill="#404040"/><path d="M1419 69 V82.5 M1419 90.4 V95.8" stroke="#404040" stroke-width="2.8"/>
<path d="M1408 73.1 L1419 80.4 L1430.3 73.1 M1419 80.4 L1408 87.9 M1427 85.6 L1430.5 88" fill="none" stroke="#404040" stroke-width="2"/>
<path d="M1405.4 71.3 L1411.4 72.3 L1408.3 76.6 Z M1432.9 71.3 L1426.9 72.3 L1430 76.6 Z M1405.4 89.7 L1408.3 84.5 L1411.4 88.8 Z M1432.9 89.7 L1426.9 88.8 L1430 84.5 Z" fill="#404040"/>
<path d="M1410.7 92.4 C1413.1 86.8 1416.6 84.8 1421.1 83.0 S1430.1 79.3 1432.9 74.7" fill="none" stroke="#a1161f" stroke-width="0.9"/>
<path d="M1411.6 93.6 C1414.0 88.0 1417.5 86.0 1422.0 84.2 S1431.0 80.5 1433.8 75.9" fill="none" stroke="#a1161f" stroke-width="0.9"/>
<path d="M1412.5 94.8 C1414.9 89.2 1418.4 87.2 1422.9 85.4 S1431.9 81.7 1434.7 77.1" fill="none" stroke="#a1161f" stroke-width="0.9"/>
<path d="M1460 76.8 V60.8 H1476.25 V68.8" fill="none" stroke="#404040" stroke-width="1.9"/>
<path d="M1461.5 66.5 L1466 62 M1461.5 70.5 L1470 62 M1464 72.5 L1474 62.5 M1469 71 L1475 65" stroke="#404040" stroke-width="0.8"/>
<text x="1463.4" y="78.4" font-size="10.6" fill="#2e3a4e">CP</text>
<circle cx="1460.00" cy="60.80" r="2.75" fill="#a1161f"/>
<circle cx="1476.25" cy="60.80" r="2.75" fill="#a1161f"/>
<circle cx="1460.00" cy="76.80" r="2.75" fill="#a1161f"/>
<path d="M1460 106.8 V90.8 H1476.25 V98.8" fill="none" stroke="#404040" stroke-width="1.9"/>
<path d="M1460 106.8 H1467.5" stroke="#404040" stroke-width="1.9"/>
<path d="M1463.8 103.3 L1471.5 96.5" stroke="#a1161f" stroke-width="1.7"/><path d="M1473.6 94.6 L1472.6 98.6 L1469.6 95.4 Z" fill="#a1161f"/>
<path d="M1462.6 98.3 L1466 95.2" stroke="#a1161f" stroke-width="1.5"/><path d="M1468 93.4 L1467 97 L1464.3 94 Z" fill="#a1161f"/>
<text x="1469.8" y="109" font-size="10.8" fill="#2e3a4e">Q</text>
<circle cx="1460.00" cy="90.80" r="2.75" fill="#a1161f"/>
<circle cx="1476.25" cy="90.80" r="2.75" fill="#a1161f"/>
<circle cx="1460.00" cy="106.80" r="2.75" fill="#a1161f"/>
<path d="M1460 137.1 V121 H1476.25 V129 M1467.9 121 V129" fill="none" stroke="#404040" stroke-width="1.9"/>
<path d="M1461.3 127 L1466 122.4 M1461.3 131 L1467 125.4 M1461.3 135 L1467 129.4" stroke="#404040" stroke-width="0.8"/>
<path d="M1469.5 122.4 L1475 127.4 M1471.8 122.4 L1475.4 125.6 M1469.3 124.6 L1473 128" stroke="#a1161f" stroke-width="0.9"/>
<text x="1465.6" y="138.4" font-size="10.8" fill="#2e3a4e">W</text>
<circle cx="1460.00" cy="121.00" r="2.75" fill="#a1161f"/>
<circle cx="1467.90" cy="121.00" r="2.75" fill="#a1161f"/>
<circle cx="1476.25" cy="121.00" r="2.75" fill="#a1161f"/>
<circle cx="1460.00" cy="137.10" r="2.75" fill="#a1161f"/>
<path d="M1601 65 V96.8 M1617.1 65 V96.8 M1592.9 72.7 H1625 M1592.9 88.75 H1625" fill="none" stroke="#a1161f" stroke-width="2.2" stroke-dasharray="9.7 2.2 5.6 2.2 20"/>
<circle cx="1601.00" cy="65.00" r="3.1" fill="#a1161f"/>
<circle cx="1617.10" cy="65.00" r="3.1" fill="#a1161f"/>
<circle cx="1601.00" cy="96.80" r="3.1" fill="#a1161f"/>
<circle cx="1617.10" cy="96.80" r="3.1" fill="#a1161f"/>
<circle cx="1592.90" cy="72.70" r="3.1" fill="#a1161f"/>
<circle cx="1592.90" cy="88.75" r="3.1" fill="#a1161f"/>
<circle cx="1625.00" cy="72.70" r="3.1" fill="#a1161f"/>
<circle cx="1625.00" cy="88.75" r="3.1" fill="#a1161f"/>
<path d="M1655 67.9 H1685.8 M1655 77.9 H1685.8 M1655 87.9 H1685.8" stroke="#cf7b82" stroke-width="2"/>
<path d="M1667.9 69.2 V95.8 M1685 69.2 V95.8 M1667 70 H1686 M1667 79.8 H1686 M1667 89.3 H1686" fill="none" stroke="#404040" stroke-width="2"/>
<path d="M1655 67.3 H1664.6 L1659.8 72.1 Z" fill="#a1161f"/>
<path d="M1655 77.3 H1664.6 L1659.8 82.1 Z" fill="#a1161f"/>
<path d="M1655 87.3 H1664.6 L1659.8 92.1 Z" fill="#a1161f"/>
<path d="M1716 58.9 V89.85 H1747" fill="none" stroke="#404040" stroke-width="2.1"/>
<rect x="1719.0" y="68.8" width="5.8" height="18.0" fill="#a1161f"/>
<rect x="1726.1" y="60.9" width="5.8" height="25.9" fill="#a1161f"/>
<rect x="1733.2" y="75.9" width="5.8" height="10.9" fill="#a1161f"/>
<rect x="1740.1" y="64.8" width="5.8" height="22.0" fill="#a1161f"/>
<path d="M1714.9 112.85 H1737 M1714.9 128 H1731.7" stroke="#404040" stroke-width="1.9"/><rect x="1715.4" y="115.8" width="19.3" height="9.4" fill="#404040"/>
<circle cx="1738" cy="123" r="7.2" fill="#f0f0f0" stroke="#a1161f" stroke-width="1.6"/><rect x="1737.25" y="121" width="1.5" height="6.6" fill="#2e3a4e"/><rect x="1737.2" y="118.2" width="1.6" height="1.7" fill="#2e3a4e"/>
<polygon points="1785.91,64.11 1785.92,60.20 1791.88,60.20 1791.89,64.11 1794.42,65.15 1797.19,62.40 1801.40,66.61 1798.65,69.38 1799.69,71.91 1803.60,71.92 1803.60,77.88 1799.69,77.89 1798.65,80.42 1801.40,83.19 1797.19,87.40 1794.42,84.65 1791.89,85.69 1791.88,89.60 1785.92,89.60 1785.91,85.69 1783.38,84.65 1780.61,87.40 1776.40,83.19 1779.15,80.42 1778.11,77.89 1774.20,77.88 1774.20,71.92 1778.11,71.91 1779.15,69.38 1776.40,66.61 1780.61,62.40 1783.38,65.15" fill="#404040"/><circle cx="1788.9" cy="74.9" r="11.3" fill="#404040"/><circle cx="1788.9" cy="74.9" r="6.2" fill="#f0f0f0"/>
<path d="M1783 104.9 V137.1 M1766.85 121 H1799" stroke="#111" stroke-width="1.3" stroke-dasharray="1.7 2.1" fill="none"/><rect x="1776.05" y="114.1" width="13.85" height="13.8" fill="#a1161f"/>
<rect x="1837.8" y="66.6" width="19.6" height="6.8" rx="0.8" fill="#404040"/><rect x="1837.1" y="65.8" width="19.4" height="6.6" rx="0.8" fill="#a1161f"/>
<path d="M1847.2 89.6 C1849 94 1853.2 98.5 1853.2 102.6 A6 6 0 0 1 1841.1 102.6 C1841.1 98.5 1845.4 94 1847.2 89.6 Z" fill="#a1161f"/>
<text transform="translate(1836 138.6) scale(1.1 1)" font-size="27" font-weight="bold" fill="#404040">A</text>
<path d="M1838.9 138.6 L1847.2 120.4" stroke="#f0f0f0" stroke-width="0.8"/>
</svg>
<span class="t" style="left:23.60px;top:4.00px;font-size:12px;color:#000;transform:scaleX(1.0403);">©</span>
<span class="t" style="left:37.20px;top:4.00px;font-size:12px;color:#000;transform:scaleX(0.9503);">MasterFrame</span>
<span class="t" style="left:109.40px;top:4.00px;font-size:12px;color:#000;transform:scaleX(1.0428);">[Main</span>
<span class="t" style="left:143.30px;top:4.00px;font-size:12px;color:#000;transform:scaleX(0.9773);">Editor]</span>
<span class="t" style="left:180.70px;top:4.00px;font-size:12px;color:#000;transform:scaleX(1.0000);">:</span>
<span class="t" style="left:187.00px;top:4.00px;font-size:12px;color:#000;transform:scaleX(0.9293);">Version</span>
<span class="t" style="left:228.60px;top:4.00px;font-size:12px;color:#000;transform:scaleX(0.8735);">2019.07</span>
<span class="t" style="left:270.60px;top:4.00px;font-size:12px;color:#000;transform:scaleX(0.8265);">x64</span>
<span class="t" style="left:290.10px;top:4.00px;font-size:12px;color:#000;transform:scaleX(1.0000);">:</span>
<span class="t" style="left:296.40px;top:4.00px;font-size:12px;color:#000;transform:scaleX(0.9657);">W:\MANUALS\2018</span>
<span class="t" style="left:403.30px;top:4.00px;font-size:12px;color:#000;transform:scaleX(0.7858);">USER</span>
<span class="t" style="left:433.90px;top:4.00px;font-size:12px;color:#000;transform:scaleX(0.9420);">MANUALS\FINITE</span>
<span class="t" style="left:531.30px;top:4.00px;font-size:12px;color:#000;transform:scaleX(0.9192);">ELEMENT\FINITE</span>
<span class="t" style="left:624.90px;top:4.00px;font-size:12px;color:#000;transform:scaleX(0.8477);">ELEMENT_FILES\FE</span>
<span class="t" style="left:727.10px;top:4.00px;font-size:12px;color:#000;transform:scaleX(0.9737);">MANUAL</span>
<span class="t" style="left:780.00px;top:4.00px;font-size:12px;color:#000;transform:scaleX(0.8857);">FRAME</span>
<span class="t" style="left:15.00px;top:26.80px;font-size:12px;color:#000;transform:scaleX(0.9305);">File</span>
<span class="t" style="left:52.30px;top:26.80px;font-size:12px;color:#000;transform:scaleX(0.9353);">Create</span>
<span class="t" style="left:105.00px;top:26.80px;font-size:12px;color:#000;transform:scaleX(1.0180);">Modify Geometry</span>
<span class="t" style="left:217.00px;top:26.80px;font-size:12px;color:#000;transform:scaleX(0.9973);">Viewing</span>
<span class="t" style="left:278.00px;top:26.80px;font-size:12px;color:#000;transform:scaleX(0.9689);">Properties</span>
<span class="t" style="left:350.00px;top:26.80px;font-size:12px;color:#000;transform:scaleX(0.9479);">Loads</span>
<span class="t" style="left:400.00px;top:26.80px;font-size:12px;color:#000;transform:scaleX(0.9383);">Restraints</span>
<span class="t" style="left:470.00px;top:26.80px;font-size:12px;color:#000;transform:scaleX(0.9555);">Analysis</span>
<span class="t" style="left:532.00px;top:26.80px;font-size:12px;color:#000;transform:scaleX(0.9246);">Results</span>
<span class="t" style="left:588.00px;top:26.80px;font-size:12px;color:#000;transform:scaleX(0.9556);">Design</span>
<span class="t" style="left:643.00px;top:26.80px;font-size:12px;color:#000;transform:scaleX(0.9520);">BIM Exchange</span>
<span class="t" style="left:736.00px;top:26.80px;font-size:12px;color:#000;transform:scaleX(0.9714);">Report</span>
<span class="t" style="left:790.00px;top:26.80px;font-size:12px;color:#000;transform:scaleX(1.0127);">Help</span>
<span class="t" style="left:20.80px;top:104.00px;font-size:12px;color:#000;transform:scaleX(0.8918);">Save</span>
<span class="t" style="left:81.30px;top:104.00px;font-size:12px;color:#000;transform:scaleX(0.9935);">Undo</span>
<span class="t" style="left:150.40px;top:104.00px;font-size:12px;color:#000;transform:scaleX(0.9598);">Filter</span>
<span class="t" style="left:203.00px;top:104.00px;font-size:12px;color:#000;transform:scaleX(0.9661);">Snapshot</span>
<span class="t" style="left:404.20px;top:104.00px;font-size:12px;color:#000;transform:scaleX(1.0237);">Number</span>
<span class="t" style="left:582.00px;top:104.00px;font-size:12px;color:#000;transform:scaleX(1.0307);">Number</span>
<span class="t" style="left:735.20px;top:104.00px;font-size:12px;color:#000;transform:scaleX(0.9945);">Support</span>
<span class="t" style="left:908.00px;top:104.00px;font-size:12px;color:#000;transform:scaleX(0.8929);">3D</span>
<span class="t" style="left:1079.40px;top:104.00px;font-size:12px;color:#000;transform:scaleX(0.9402);">Frame</span>
<span class="t" style="left:1080.80px;top:118.80px;font-size:12px;color:#000;transform:scaleX(0.9235);">Loads</span>
<span class="t" style="left:1145.40px;top:104.00px;font-size:12px;color:#000;transform:scaleX(0.9628);">Gravity</span>
<span class="t" style="left:1340.20px;top:104.00px;font-size:12px;color:#000;transform:scaleX(0.9984);">Wind</span>
<span class="t" style="left:1393.30px;top:104.00px;font-size:12px;color:#000;transform:scaleX(0.9945);">Direction</span>
<span class="t" style="left:1594.50px;top:103.80px;font-size:12px;color:#000;transform:scaleX(0.9068);">Grids</span>
<span class="t" style="left:1655.50px;top:103.80px;font-size:12px;color:#000;transform:scaleX(0.9237);">Level</span>
<span class="t" style="left:1647.50px;top:118.80px;font-size:12px;color:#000;transform:scaleX(1.0132);">Number</span>
<span class="t" style="left:295.40px;top:60.00px;font-size:12px;color:#000;transform:scaleX(0.9370);">Frame Views</span>
<span class="t" style="left:292.30px;top:89.70px;font-size:12px;color:#000;transform:scaleX(0.9499);">View Filters</span>
<span class="t" style="left:292.30px;top:119.70px;font-size:12px;color:#000;transform:scaleX(0.9919);">Lower Columns</span>
<span class="t" style="left:490.40px;top:60.00px;font-size:12px;color:#000;transform:scaleX(0.9119);">Section Sizes</span>
<span class="t" style="left:490.40px;top:89.70px;font-size:12px;color:#000;transform:scaleX(0.9600);">Beta Angles</span>
<span class="t" style="left:490.40px;top:119.70px;font-size:12px;color:#000;transform:scaleX(0.9836);">Length</span>
<span class="t" style="left:668.00px;top:60.00px;font-size:12px;color:#000;transform:scaleX(0.9079);">X Values</span>
<span class="t" style="left:668.00px;top:89.70px;font-size:12px;color:#000;transform:scaleX(0.9122);">Y Values</span>
<span class="t" style="left:668.00px;top:119.70px;font-size:12px;color:#000;transform:scaleX(0.9210);">Z Values</span>
<span class="t" style="left:820.40px;top:60.00px;font-size:12px;color:#000;transform:scaleX(0.9699);">Stiff Deck</span>
<span class="t" style="left:820.40px;top:89.70px;font-size:12px;color:#000;transform:scaleX(0.8665);">Releases</span>
<span class="t" style="left:979.00px;top:60.00px;font-size:12px;color:#000;transform:scaleX(0.9702);">Show Founds</span>
<span class="t" style="left:979.00px;top:89.70px;font-size:12px;color:#000;transform:scaleX(0.9662);">Draw Short</span>
<span class="t" style="left:979.00px;top:119.70px;font-size:12px;color:#000;transform:scaleX(0.9303);">End Plates</span>
<span class="t" style="left:1227.30px;top:58.80px;font-size:12px;color:#000;transform:scaleX(0.9518);">Patch Loads</span>
<span class="t" style="left:1227.30px;top:89.70px;font-size:12px;color:#000;transform:scaleX(0.9401);">Line Loads</span>
<span class="t" style="left:1227.30px;top:120.70px;font-size:12px;color:#000;transform:scaleX(0.9383);">Show Key</span>
<span class="t" style="left:1482.50px;top:60.00px;font-size:12px;color:#000;transform:scaleX(0.9305);">Coef Values</span>
<span class="t" style="left:1482.50px;top:89.75px;font-size:12px;color:#000;transform:scaleX(0.9093);">Pressure Values</span>
<span class="t" style="left:1482.50px;top:119.75px;font-size:12px;color:#000;transform:scaleX(0.9908);">Wind Zone</span>
<span class="t" style="left:44.20px;top:148.50px;font-size:12px;color:#fff;transform:scaleX(1.0112);">Actions</span>
<span class="t" style="left:211.00px;top:148.50px;font-size:12px;color:#fff;transform:scaleX(0.9766);">Views and Filtering</span>
<span class="t" style="left:456.00px;top:148.50px;font-size:12px;color:#fff;transform:scaleX(0.9997);">Members</span>
<span class="t" style="left:584.00px;top:148.50px;font-size:12px;color:#fff;transform:scaleX(0.9834);">Nodes and Coordinates</span>
<span class="t" style="left:739.00px;top:148.50px;font-size:12px;color:#fff;transform:scaleX(0.9631);">Supports and Restraints</span>
<span class="t" style="left:940.00px;top:148.50px;font-size:12px;color:#fff;transform:scaleX(0.9696);">3D Drawing</span>
<span class="t" style="left:1079.40px;top:148.50px;font-size:12px;color:#fff;transform:scaleX(0.9357);">Loads</span>
<span class="t" style="left:1178.30px;top:148.50px;font-size:12px;color:#fff;transform:scaleX(0.9588);">Gravity Area Load</span>
<span class="t" style="left:1418.30px;top:148.50px;font-size:12px;color:#fff;transform:scaleX(0.9813);">Wind Load</span>
<span class="t" style="left:1583.25px;top:148.50px;font-size:12px;color:#fff;transform:scaleX(0.9455);">Grid Lines and Levels</span>
<span class="t" style="left:1716.25px;top:148.50px;font-size:12px;color:#fff;transform:scaleX(0.8864);">Stats</span>
<span class="t" style="left:1804.25px;top:148.50px;font-size:12px;color:#fff;transform:scaleX(0.9528);">Display</span>
<span class="t" style="left:1643.00px;top:181.00px;font-size:13.5px;color:#000;-webkit-text-stroke:0.35px #000;transform:scaleX(0.8398);">FE</span>
<span class="t" style="left:1661.20px;top:181.00px;font-size:13.5px;color:#000;-webkit-text-stroke:0.35px #000;transform:scaleX(0.9618);">Slab</span>
<span class="t" style="left:1691.00px;top:181.00px;font-size:13.5px;color:#000;-webkit-text-stroke:0.35px #000;transform:scaleX(1.0254);">Stiff</span>
<span class="t" style="left:1718.40px;top:181.00px;font-size:13.5px;color:#000;-webkit-text-stroke:0.35px #000;transform:scaleX(1.1617);">Region</span>
<span class="t" style="left:1771.80px;top:181.00px;font-size:13.5px;color:#000;-webkit-text-stroke:0.35px #000;transform:scaleX(1.0150);">Mems</span>
<span class="t" style="left:1590.40px;top:218.20px;font-size:11px;color:#000;transform:scaleX(0.9629);">FE Surface 001</span>
<span class="t" style="left:1576.60px;top:282.00px;font-size:11px;color:#000;transform:scaleX(0.8896);">Slab</span>
<span class="t" style="left:1599.10px;top:282.00px;font-size:11px;color:#000;transform:scaleX(1.0764);">Stiff</span>
<span class="t" style="left:1622.20px;top:282.00px;font-size:11px;color:#000;transform:scaleX(0.9556);">Column/Wall</span>
<span class="t" style="left:1684.30px;top:282.00px;font-size:11px;color:#000;transform:scaleX(0.9524);">Region</span>
<span class="t" style="left:1720.40px;top:282.00px;font-size:11px;color:#000;transform:scaleX(0.9143);">Mesh</span>
<span class="t" style="left:1747.90px;top:282.00px;font-size:11px;color:#000;transform:scaleX(0.9889);">Options</span>
<span class="t" style="left:1576.60px;top:305.20px;font-size:11px;color:#000;transform:scaleX(0.9731);">Options</span>
<span class="t" style="left:1617.00px;top:305.20px;font-size:11px;color:#000;transform:scaleX(0.9469);">to</span>
<span class="t" style="left:1629.40px;top:305.20px;font-size:11px;color:#000;transform:scaleX(0.9376);">model</span>
<span class="t" style="left:1660.60px;top:305.20px;font-size:11px;color:#000;transform:scaleX(1.1819);">stiff</span>
<span class="t" style="left:1682.90px;top:305.20px;font-size:11px;color:#000;transform:scaleX(0.9590);">regions</span>
<span class="t" style="left:1720.40px;top:305.20px;font-size:11px;color:#000;transform:scaleX(0.9643);">where</span>
<span class="t" style="left:1752.20px;top:305.20px;font-size:11px;color:#000;transform:scaleX(1.0019);">walls</span>
<span class="t" style="left:1780.20px;top:305.20px;font-size:11px;color:#000;transform:scaleX(0.9151);">and</span>
<span class="t" style="left:1800.40px;top:305.20px;font-size:11px;color:#000;transform:scaleX(0.9397);">columns</span>
<span class="t" style="left:1841.70px;top:305.20px;font-size:11px;color:#000;transform:scaleX(1.0256);">interact</span>
<span class="t" style="left:1576.60px;top:318.20px;font-size:11px;color:#000;transform:scaleX(1.0019);">with</span>
<span class="t" style="left:1599.70px;top:318.20px;font-size:11px;color:#000;transform:scaleX(0.9874);">horizontal</span>
<span class="t" style="left:1649.70px;top:318.20px;font-size:11px;color:#000;transform:scaleX(0.9322);">slabs.</span>
<span class="t" style="left:1577.40px;top:349.00px;font-size:11px;color:#000;transform:scaleX(0.9460);">Selected</span>
<span class="t" style="left:1621.30px;top:349.00px;font-size:11px;color:#000;transform:scaleX(0.9219);">column</span>
<span class="t" style="left:1657.50px;top:349.00px;font-size:11px;color:#000;transform:scaleX(0.9423);">and</span>
<span class="t" style="left:1678.00px;top:349.00px;font-size:11px;color:#000;transform:scaleX(0.9444);">wall</span>
<span class="t" style="left:1698.80px;top:349.00px;font-size:11px;color:#000;transform:scaleX(0.9423);">members</span>
<span class="t" style="left:1666.40px;top:436.60px;font-size:12px;color:#000;transform:scaleX(0.9523);">1 of 5</span>
<span class="t" style="left:1567.90px;top:462.30px;font-size:10.5px;color:#000;transform:scaleX(0.9999);">00019</span>
<span class="t" style="left:1600.50px;top:462.30px;font-size:10.5px;color:#000;transform:scaleX(1.0204);">00020</span>
<span class="t" style="left:1633.80px;top:462.30px;font-size:10.5px;color:#000;transform:scaleX(1.0067);">00039</span>
<span class="t" style="left:1667.00px;top:462.30px;font-size:10.5px;color:#000;transform:scaleX(1.0067);">00040</span>
<span class="t" style="left:1699.60px;top:462.30px;font-size:10.5px;color:#000;transform:scaleX(1.0307);">00073</span>
<span class="t" style="left:1732.80px;top:462.30px;font-size:10.5px;color:#000;transform:scaleX(1.0307);">00074</span>
<span class="t" style="left:1766.10px;top:462.30px;font-size:10.5px;color:#000;transform:scaleX(1.0273);">00084</span>
<span class="t" style="left:1799.00px;top:462.30px;font-size:10.5px;color:#000;transform:scaleX(1.0376);">00085</span>
<span class="t" style="left:1831.60px;top:462.30px;font-size:10.5px;color:#000;transform:scaleX(1.0410);">00123</span>
<span class="t" style="left:1567.90px;top:475.30px;font-size:10.5px;color:#000;transform:scaleX(1.0204);">00124</span>
<span class="t" style="left:1600.50px;top:475.30px;font-size:10.5px;color:#000;transform:scaleX(1.0204);">00134</span>
<span class="t" style="left:1633.80px;top:475.30px;font-size:10.5px;color:#000;transform:scaleX(1.0067);">00135</span>
<span class="t" style="left:1667.00px;top:475.30px;font-size:10.5px;color:#000;transform:scaleX(1.0067);">00147</span>
<span class="t" style="left:1699.60px;top:475.30px;font-size:10.5px;color:#000;transform:scaleX(1.0307);">00148</span>
<span class="t" style="left:1566.30px;top:1077.00px;font-size:12px;color:#000;transform:scaleX(0.9600);">Delete</span>
<span class="t" style="left:1602.60px;top:1077.00px;font-size:12px;color:#000;transform:scaleX(1.0117);">All</span>
<span class="t" style="left:1619.40px;top:1077.00px;font-size:12px;color:#000;transform:scaleX(0.9917);">Invalid</span>
<span class="t" style="left:1587.40px;top:1104.20px;font-size:12px;color:#000;transform:scaleX(0.9209);">Draw</span>
<span class="t" style="left:1616.10px;top:1104.20px;font-size:12px;color:#000;transform:scaleX(1.1016);">All</span>
<span class="t" style="left:13.90px;top:1142.00px;font-size:12px;color:#000;transform:scaleX(0.9620);">View: Full Frame</span>
<span class="t" style="left:460.00px;top:1142.00px;font-size:12px;color:#000;transform:scaleX(0.9288);">PDF session closed</span>
<span class="t" style="left:1490.50px;top:1021.60px;font-size:11px;color:#000;transform:scaleX(0.8851);">Y</span>
<span class="t" style="left:1515.00px;top:1043.00px;font-size:11px;color:#000;transform:scaleX(0.9652);">Z</span>
<span class="t" style="left:1533.00px;top:1076.30px;font-size:11px;color:#000;transform:scaleX(0.9532);">X</span>
</body></html>
